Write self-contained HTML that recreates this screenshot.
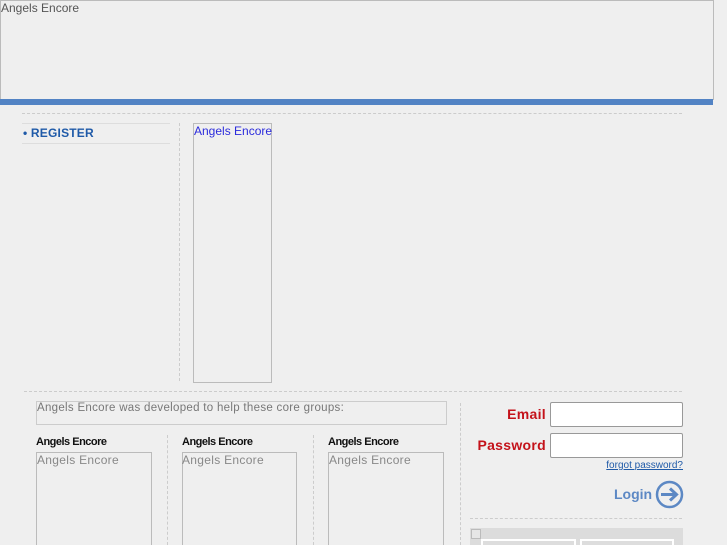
<!DOCTYPE html>
<html style="overflow:hidden;height:545px"><head><style>
body{margin:0;width:727px;height:545px;background:#efefef;font-family:"Liberation Sans",sans-serif;position:relative;overflow:hidden}
.a{position:absolute}
.dh{border-top:1px dashed #ccc;height:0}
.dv{border-left:1px dashed #ccc;width:0}
.box{border:1px solid #bbb;box-sizing:border-box}
.h{font-size:11px;font-weight:bold;letter-spacing:-0.5px;color:#111}
.g{font-size:12px;color:#888;letter-spacing:0.3px}
input{position:absolute;border:1px solid #999;border-radius:2px;background:#fff;box-sizing:border-box;margin:0;padding:0}
.lbl{font-size:14px;font-weight:bold;color:#c4121a;text-align:right;letter-spacing:0.3px}
</style></head><body>
<div class="a box" style="left:0;top:0;width:714px;height:100px;border-color:#bbb"></div>
<div class="a" style="left:1px;top:1px;font-size:12px;color:#555">Angels Encore</div>
<div class="a" style="left:0;top:99px;width:713px;height:6px;background:#5283c4"></div>
<div class="a dh" style="left:22px;top:113px;width:660px"></div>
<div class="a" style="left:22px;top:123px;width:148px;border-top:1px solid #ddd"></div>
<div class="a" style="left:22px;top:143px;width:148px;border-top:1px solid #ddd"></div>
<div class="a" style="left:23px;top:126px;font-size:12px;font-weight:bold;color:#1f5aa8;letter-spacing:0.2px">• REGISTER</div>
<div class="a dv" style="left:179px;top:123px;height:258px"></div>
<div class="a box" style="left:193px;top:123px;width:79px;height:260px"></div>
<div class="a" style="left:194px;top:124px;font-size:12px;color:#2b2bdc">Angels Encore</div>
<div class="a dh" style="left:24px;top:391px;width:658px"></div>
<div class="a box" style="left:36px;top:401px;width:411px;height:24px;border-color:#ccc"></div>
<div class="a g" style="left:37px;top:402px;font-size:11.5px;color:#777">Angels Encore was developed to help these core groups:</div>
<div class="a dv" style="left:167px;top:435px;height:110px"></div>
<div class="a dv" style="left:313px;top:435px;height:110px"></div>
<div class="a dv" style="left:460px;top:403px;height:142px"></div>
<div class="a h" style="left:36px;top:436px">Angels Encore</div>
<div class="a h" style="left:182px;top:436px">Angels Encore</div>
<div class="a h" style="left:328px;top:436px">Angels Encore</div>
<div class="a box" style="left:36px;top:452px;width:116px;height:93px;border-bottom:none"></div>
<div class="a box" style="left:182px;top:452px;width:115px;height:93px;border-bottom:none"></div>
<div class="a box" style="left:328px;top:452px;width:116px;height:93px;border-bottom:none"></div>
<div class="a g" style="left:37px;top:453px">Angels Encore</div>
<div class="a g" style="left:182px;top:453px">Angels Encore</div>
<div class="a g" style="left:329px;top:453px">Angels Encore</div>
<div class="a lbl" style="left:460px;top:406px;width:86px">Email</div>
<div class="a lbl" style="left:460px;top:437px;width:86px">Password</div>
<input style="left:550px;top:402px;width:133px;height:25px">
<input style="left:550px;top:433px;width:133px;height:25px">
<div class="a" style="left:560px;top:460px;width:123px;text-align:right;font-size:10px;color:#1f5aa8;text-decoration:underline">forgot password?</div>
<div class="a" style="left:614px;top:486px;font-size:14px;font-weight:bold;color:#5c88c4">Login</div>
<svg class="a" style="left:655px;top:480px" width="29" height="29" viewBox="0 0 29 29"><circle cx="14.5" cy="14.5" r="12.5" fill="none" stroke="#5c88c4" stroke-width="2.5"/><path d="M6 14.5H21M15 8.5L21.5 14.5L15 20.5" fill="none" stroke="#5c88c4" stroke-width="3"/></svg>
<div class="a dh" style="left:470px;top:518px;width:212px"></div>
<div class="a" style="left:470px;top:528px;width:213px;height:17px;background:#dcdcdc"></div>
<div class="a" style="left:471px;top:529px;width:8px;height:8px;border:1px solid #bbb;background:#e6e6e6"></div>
<div class="a" style="left:481px;top:539px;width:91px;height:6px;border:2px solid #fff;border-bottom:none;background:#ddd"></div>
<div class="a" style="left:580px;top:539px;width:90px;height:6px;border:2px solid #fff;border-bottom:none;background:#ddd"></div>
</body></html>
